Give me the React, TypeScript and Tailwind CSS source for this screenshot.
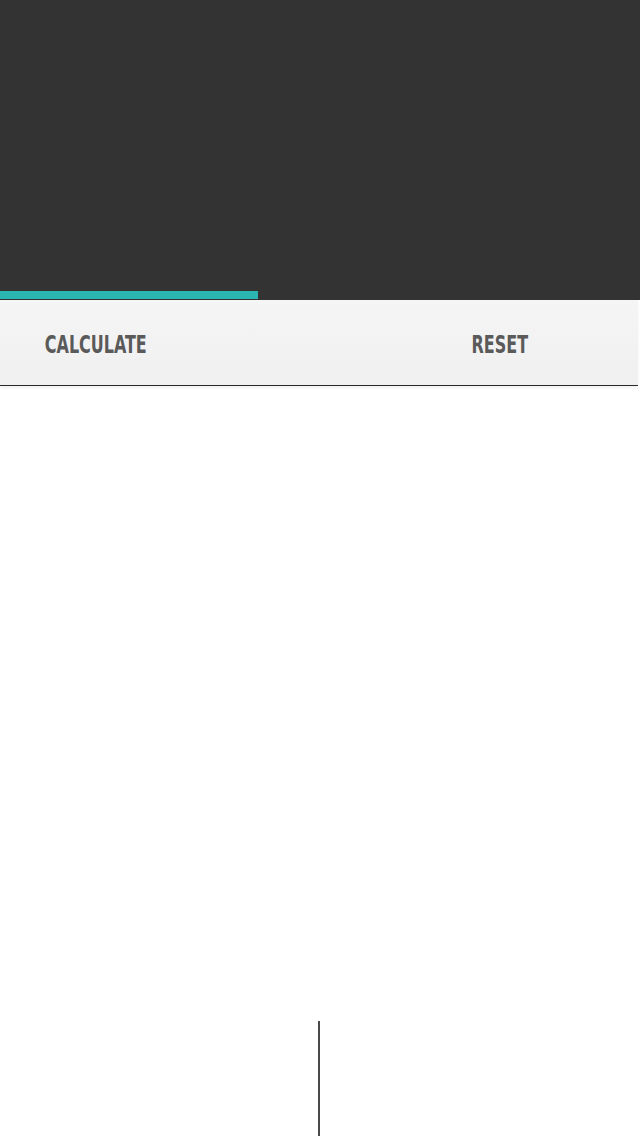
export default function App() {
  const btnText =
    "inline-block whitespace-nowrap scale-x-[0.71] text-[25px] font-bold leading-none text-[#5a5a5a] [font-family:'Liberation_Sans_Narrow','DejaVu_Sans_Condensed','Liberation_Sans',sans-serif]";

  return (
    <div className="flex h-[1136px] w-[640px] flex-col overflow-hidden bg-white">
      {/* header */}
      <div className="flex h-[300px] flex-col justify-end bg-[#333333]">
        <div className="mb-px h-[8px] w-[258px] bg-[#2bb5b1]" />
      </div>

      {/* action bar */}
      <div className="relative w-[638px] border-b border-[#2a2a2a] bg-gradient-to-b from-[#f5f5f5] to-[#f0f0f0] shadow-[0_2px_3px_rgba(0,0,0,0.06)]">
        <div className="flex h-[85px] items-center pt-[3px]">
          <button className="ml-[45px] flex w-[102px] justify-center">
            <span className={btnText}>CALCULATE</span>
          </button>
          <button className="ml-auto mr-[111px] flex w-[54px] justify-center">
            <span className={btnText}>RESET</span>
          </button>
        </div>
      </div>

      {/* content */}
      <div className="flex-1" />

      {/* bottom split */}
      <div className="flex h-[115px]">
        <div className="w-[318px]" />
        <div className="flex-1 border-l-2 border-[#4a4a4a]" />
      </div>
    </div>
  );
}
